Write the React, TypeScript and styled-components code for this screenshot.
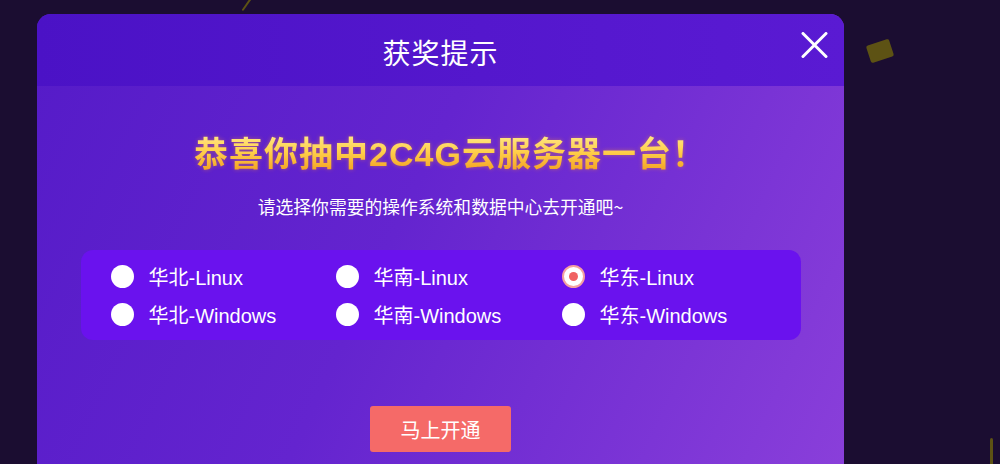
import React, { useState } from 'react';
import styled, { createGlobalStyle } from 'styled-components';

const GlobalStyle = createGlobalStyle`
  html, body {
    margin: 0;
    padding: 0;
    background: #1b0d31;
  }
  body {
    font-family: "Liberation Sans", "Noto Sans CJK SC", sans-serif;
  }
`;

const Backdrop = styled.div`
  position: relative;
  width: 1000px;
  height: 464px;
  overflow: hidden;
  background: #1b0d31;
`;

const Confetti = styled.div<{ $x: number; $y: number; $w: number; $h: number; $r: number }>`
  position: absolute;
  left: ${(p) => p.$x}px;
  top: ${(p) => p.$y}px;
  width: ${(p) => p.$w}px;
  height: ${(p) => p.$h}px;
  background: #5d5214;
  transform: rotate(${(p) => p.$r}deg);
  border-radius: 2px;
`;

const Modal = styled.div`
  display: flex;
  flex-direction: column;
  width: 807px;
  height: 460px;
  margin: 14px 0 0 37px;
  border-radius: 14px 14px 0 0;
  overflow: hidden;
  background: linear-gradient(115deg, #551bc8 0%, #6424cf 45%, #8a3fda 100%);
`;

const Header = styled.div`
  display: grid;
  grid-template-columns: 1fr auto 1fr;
  align-items: center;
  height: 72px;
  background: linear-gradient(90deg, #4b12c6 0%, #5417cd 55%, #5a1ad3 100%);
`;

const Title = styled.h2`
  grid-column: 2;
  margin: 0;
  font-family: "Noto Sans CJK SC", sans-serif;
  font-size: 28px;
  font-weight: 400;
  color: #ffffff;
  letter-spacing: 1px;
  transform: translateY(2px);
`;

const CloseButton = styled.button`
  justify-self: end;
  margin-right: 15px;
  width: 30px;
  height: 30px;
  padding: 0;
  border: none;
  background: transparent;
  cursor: pointer;
  display: flex;
  align-items: center;
  justify-content: center;
  transform: translateY(-5px);
`;

const Body = styled.div`
  display: flex;
  flex-direction: column;
  align-items: center;
`;

const Headline = styled.h1`
  margin: 48px 0 0 20px;
  height: 40px;
  line-height: 40px;
  font-family: "Liberation Sans", "Noto Sans CJK SC", sans-serif;
  font-size: 34px;
  font-weight: 700;
  letter-spacing: 1px;
  background: linear-gradient(180deg, #ffe88a 0%, #ffcf4a 45%, #f29a1c 100%);
  -webkit-background-clip: text;
  background-clip: text;
  color: transparent;
  filter: drop-shadow(0 0 2px rgba(255, 160, 40, 0.45));
`;

const Subtitle = styled.p`
  margin: 20px 0 0;
  line-height: 24px;
  font-family: "Noto Sans CJK SC", sans-serif;
  font-size: 17.8px;
  color: #ffffff;
`;

const OptionBox = styled.div`
  display: grid;
  grid-template-columns: 225px 226px auto;
  grid-auto-rows: 23px;
  align-content: start;
  row-gap: 15px;
  box-sizing: border-box;
  width: 720px;
  height: 90px;
  margin-top: 32px;
  padding: 15px 0 0 30px;
  border-radius: 12px;
  background: #6a12ee;
`;

const Option = styled.label`
  display: flex;
  align-items: center;
  gap: 15px;
  height: 23px;
  font-size: 20px;
  color: #ffffff;
  cursor: pointer;
`;

const Radio = styled.span<{ $checked: boolean }>`
  display: flex;
  align-items: center;
  justify-content: center;
  box-sizing: border-box;
  width: 23px;
  height: 23px;
  border-radius: 50%;
  background: #ffffff;
  border: ${(p) => (p.$checked ? '2px solid #f4a0a0' : 'none')};

  &::after {
    content: '';
    display: ${(p) => (p.$checked ? 'block' : 'none')};
    width: 9px;
    height: 9px;
    border-radius: 50%;
    background: #f06262;
  }
`;

const SubmitButton = styled.button`
  margin-top: 66px;
  width: 141px;
  height: 46px;
  border: none;
  border-radius: 3px;
  background: #f56a68;
  color: #ffffff;
  font-family: "Noto Sans CJK SC", sans-serif;
  font-size: 20px;
  cursor: pointer;
`;

const options = [
  '华北-Linux',
  '华南-Linux',
  '华东-Linux',
  '华北-Windows',
  '华南-Windows',
  '华东-Windows',
];

export default function App() {
  const [selected, setSelected] = useState('华东-Linux');

  return (
    <>
      <GlobalStyle />
      <Backdrop>
        <Confetti $x={868} $y={42} $w={24} $h={18} $r={-18} />
        <Confetti $x={246} $y={-4} $w={2} $h={16} $r={35} />
        <Confetti $x={990} $y={438} $w={3} $h={30} $r={0} />
        <Modal>
          <Header>
            <Title>获奖提示</Title>
            <CloseButton aria-label="关闭">
              <svg width="27" height="26" viewBox="0 0 27 26">
                <path d="M2 1.5 L25 24.5 M25 1.5 L2 24.5" stroke="#ffffff" strokeWidth="3" strokeLinecap="round" />
              </svg>
            </CloseButton>
          </Header>
          <Body>
            <Headline>恭喜你抽中2C4G云服务器一台！</Headline>
            <Subtitle>请选择你需要的操作系统和数据中心去开通吧~</Subtitle>
            <OptionBox>
              {options.map((o) => (
                <Option key={o} onClick={() => setSelected(o)}>
                  <Radio $checked={selected === o} />
                  {o}
                </Option>
              ))}
            </OptionBox>
            <SubmitButton>马上开通</SubmitButton>
          </Body>
        </Modal>
      </Backdrop>
    </>
  );
}
